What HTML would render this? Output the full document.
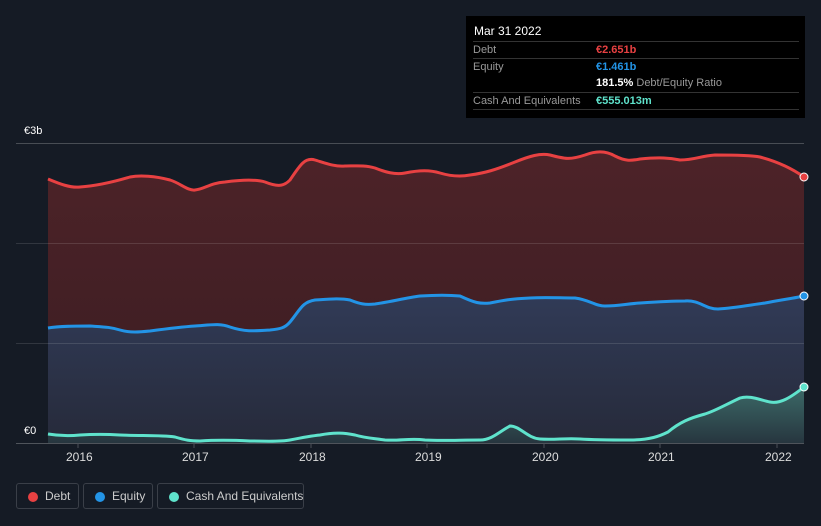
<!DOCTYPE html>
<html><head><style>
body{margin:0;width:821px;height:526px;background:#151b25;font-family:"Liberation Sans",sans-serif;overflow:hidden;position:relative}
.tt{position:absolute;left:466px;top:16px;width:339px;height:102px;background:#000}
.tt .h{position:absolute;left:8px;top:8px;color:#fff;font-size:12px}
.row{position:absolute;left:7px;width:326px;border-top:1px solid #333;font-size:11px;color:#999;height:16px;line-height:17px;white-space:nowrap}
.row span{position:absolute;left:123px}
.lg{position:absolute;top:483px;height:26px;border:1px solid #3a3f48;border-radius:3px;color:#ccc;font-size:12px;line-height:24px;box-sizing:border-box;white-space:nowrap}
.lg i{position:absolute;left:11px;top:8px;width:10px;height:10px;border-radius:50%}
.lg b{font-weight:normal;position:absolute;left:28px}
.yr{position:absolute;top:450px;color:#ddd;font-size:12px}
</style></head><body>
<svg width="821" height="526" style="position:absolute;left:0;top:0">
<defs>
<linearGradient id="d" x1="0" y1="0" x2="0" y2="1"><stop offset="0" stop-color="#4d2328"/><stop offset="1" stop-color="#3a1c22"/></linearGradient>
<linearGradient id="e" x1="0" y1="0" x2="0" y2="1"><stop offset="0" stop-color="#313b57"/><stop offset="1" stop-color="#262a3a"/></linearGradient>
<linearGradient id="c" x1="0" y1="0" x2="0" y2="1"><stop offset="0" stop-color="#3c6a68"/><stop offset="1" stop-color="#27363f"/></linearGradient>
</defs>
<path fill="url(#d)" d="M48,179 C60,184 70,188 80,187 C95,186 110,183 130,177 C140,175 155,176 170,180 C180,183 188,191 195,190 C205,189 210,183 225,182 C240,180 255,179 265,182 C280,188 285,185 290,180 C300,165 305,157 315,160 C325,163 335,167 345,166 C355,166 365,165 375,168 C385,172 395,175 405,173 C420,170 430,170 440,173 C450,176 460,177 470,175 C485,173 495,170 515,162 C530,156 540,153 550,155 C565,159 570,160 585,155 C595,151 605,150 615,156 C625,161 630,161 640,159 C660,157 670,158 680,160 C695,160 700,156 715,155 C730,155 750,155 760,157 C775,161 790,167 804,177 L804,443 L48,443 Z"/>
<path fill="url(#e)" d="M48,328 C60,326 75,326 90,326 C105,327 110,327 120,330 C130,333 140,332 150,331 C165,329 180,327 195,326 C210,325 220,323 230,327 C245,332 255,331 270,330 C280,329 285,328 290,322 C300,310 302,302 315,300 C330,299 340,298 350,300 C360,304 365,305 375,304 C390,302 405,298 420,296 C435,295 450,295 460,296 C475,303 480,304 490,303 C505,300 510,299 530,298 C545,297 560,298 575,298 C590,300 595,306 605,306 C620,306 625,304 640,303 C655,302 670,301 685,301 C700,300 705,309 718,309 C735,308 750,305 765,303 C780,300 795,298 804,296 L804,443 L48,443 Z"/>
<path fill="url(#c)" d="M48,434 C60,436 70,436 80,435 C95,434 105,434 120,435 C140,436 160,435 175,437 C185,440 190,441 200,441 C215,440 230,440 250,441 C265,441 280,442 290,440 C300,438 310,436 320,435 C335,432 345,433 355,435 C365,438 370,438 385,440 C400,441 410,438 425,440 C440,441 460,440 480,440 C492,440 500,431 510,426 C520,426 527,438 540,439 C555,440 565,438 580,439 C595,440 615,440 630,440 C650,440 660,436 668,432 C680,422 690,418 705,414 C715,411 725,405 740,398 C750,395 760,400 770,402 C780,404 790,398 804,387 L804,443 L48,443 Z"/>
<g stroke="#ffffff" stroke-opacity="0.12" stroke-width="1"><line x1="16" y1="143.5" x2="804" y2="143.5" stroke-opacity="0.22"/><line x1="16" y1="243.5" x2="804" y2="243.5"/><line x1="16" y1="343.5" x2="804" y2="343.5"/><line x1="16" y1="443.5" x2="804" y2="443.5" stroke-opacity="0.25"/></g>
<path fill="none" stroke="#e84142" stroke-width="3" d="M48,179 C60,184 70,188 80,187 C95,186 110,183 130,177 C140,175 155,176 170,180 C180,183 188,191 195,190 C205,189 210,183 225,182 C240,180 255,179 265,182 C280,188 285,185 290,180 C300,165 305,157 315,160 C325,163 335,167 345,166 C355,166 365,165 375,168 C385,172 395,175 405,173 C420,170 430,170 440,173 C450,176 460,177 470,175 C485,173 495,170 515,162 C530,156 540,153 550,155 C565,159 570,160 585,155 C595,151 605,150 615,156 C625,161 630,161 640,159 C660,157 670,158 680,160 C695,160 700,156 715,155 C730,155 750,155 760,157 C775,161 790,167 804,177"/>
<path fill="none" stroke="#2394e6" stroke-width="3" d="M48,328 C60,326 75,326 90,326 C105,327 110,327 120,330 C130,333 140,332 150,331 C165,329 180,327 195,326 C210,325 220,323 230,327 C245,332 255,331 270,330 C280,329 285,328 290,322 C300,310 302,302 315,300 C330,299 340,298 350,300 C360,304 365,305 375,304 C390,302 405,298 420,296 C435,295 450,295 460,296 C475,303 480,304 490,303 C505,300 510,299 530,298 C545,297 560,298 575,298 C590,300 595,306 605,306 C620,306 625,304 640,303 C655,302 670,301 685,301 C700,300 705,309 718,309 C735,308 750,305 765,303 C780,300 795,298 804,296"/>
<path fill="none" stroke="#5fe3cc" stroke-width="3" d="M48,434 C60,436 70,436 80,435 C95,434 105,434 120,435 C140,436 160,435 175,437 C185,440 190,441 200,441 C215,440 230,440 250,441 C265,441 280,442 290,440 C300,438 310,436 320,435 C335,432 345,433 355,435 C365,438 370,438 385,440 C400,441 410,438 425,440 C440,441 460,440 480,440 C492,440 500,431 510,426 C520,426 527,438 540,439 C555,440 565,438 580,439 C595,440 615,440 630,440 C650,440 660,436 668,432 C680,422 690,418 705,414 C715,411 725,405 740,398 C750,395 760,400 770,402 C780,404 790,398 804,387"/>
<circle cx="804" cy="177" r="4" fill="#e84142" stroke="#fff"/>
<circle cx="804" cy="296" r="4" fill="#2394e6" stroke="#fff"/>
<circle cx="804" cy="387" r="4" fill="#5fe3cc" stroke="#fff"/>
<g stroke="#4a4f58"><line x1="78" y1="443" x2="78" y2="448"/><line x1="194" y1="443" x2="194" y2="448"/><line x1="311" y1="443" x2="311" y2="448"/><line x1="427" y1="443" x2="427" y2="448"/><line x1="544" y1="443" x2="544" y2="448"/><line x1="660" y1="443" x2="660" y2="448"/><line x1="777" y1="443" x2="777" y2="448"/></g>
</svg>
<div style="position:absolute;left:24px;top:125px;color:#fff;font-size:11px">€3b</div>
<div style="position:absolute;left:24px;top:425px;color:#fff;font-size:11px">€0</div>
<div class="yr" style="left:66px">2016</div><div class="yr" style="left:182px">2017</div><div class="yr" style="left:299px">2018</div><div class="yr" style="left:415px">2019</div><div class="yr" style="left:532px">2020</div><div class="yr" style="left:648px">2021</div><div class="yr" style="left:765px">2022</div>
<div class="tt"><div class="h">Mar 31 2022</div>
<div class="row" style="top:25px">Debt<span style="color:#e84142;font-weight:bold">€2.651b</span></div>
<div class="row" style="top:42px">Equity<span style="color:#2394e6;font-weight:bold">€1.461b</span></div>
<div class="row" style="top:59px;border-top:none"><span><b style="color:#fff">181.5%</b> Debt/Equity Ratio</span></div>
<div class="row" style="top:76px">Cash And Equivalents<span style="color:#5fe3cc;font-weight:bold">€555.013m</span></div>
<div class="row" style="top:93px;height:0"></div>
</div>
<div class="lg" style="left:16px;width:63px"><i style="background:#e84142"></i><b>Debt</b></div>
<div class="lg" style="left:83px;width:70px"><i style="background:#2394e6"></i><b>Equity</b></div>
<div class="lg" style="left:157px;width:147px"><i style="background:#5fe3cc"></i><b>Cash And Equivalents</b></div>
</body></html>
